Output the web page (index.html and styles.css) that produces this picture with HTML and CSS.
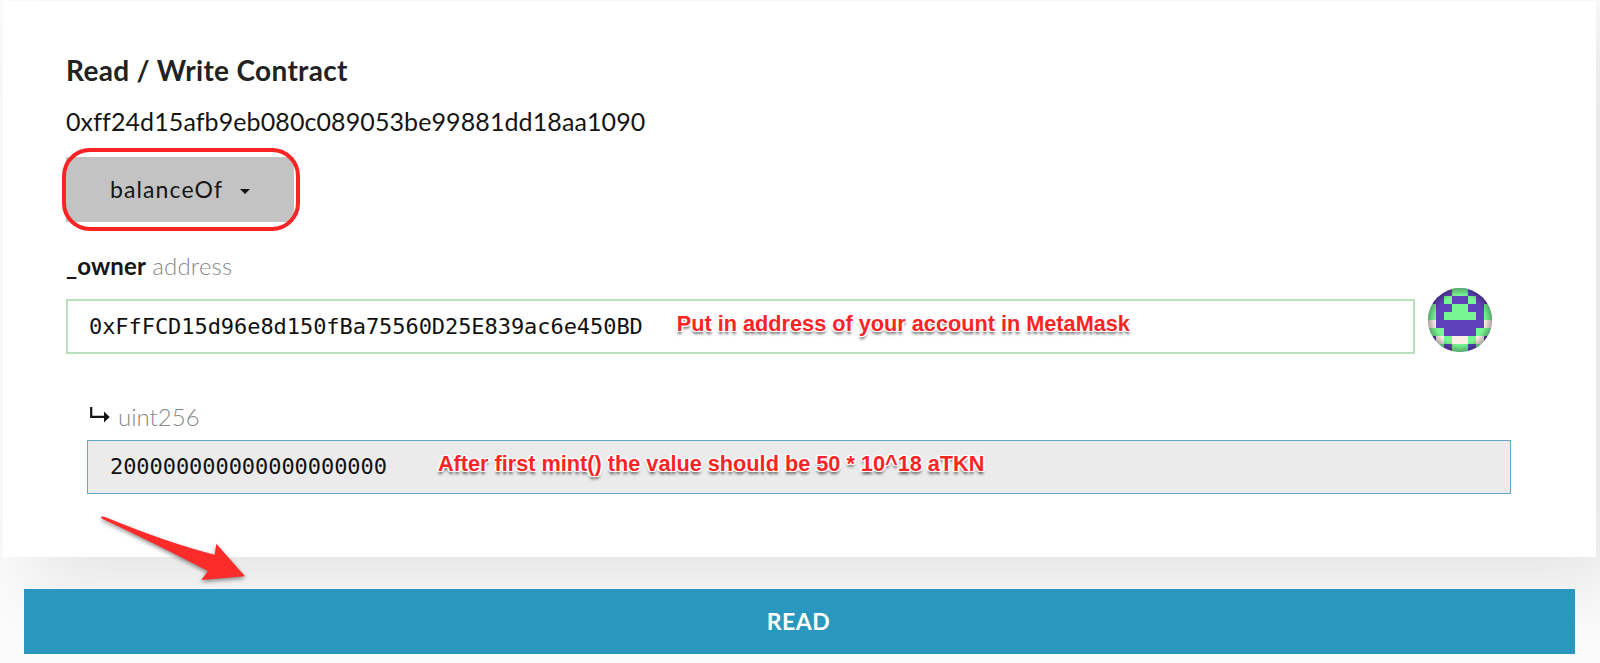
FILE: index.html
```html
<!DOCTYPE html>
<html lang="en">
<head>
<meta charset="utf-8">
<title>Read / Write Contract</title>
<link rel="stylesheet" href="styles.css">
</head>
<body>
<main class="page">
  <section class="card">
    <h1 class="title">Read / Write Contract</h1>
    <p class="contract">0xff24d15afb9eb080c089053be99881dd18aa1090</p>
    <button class="method">balanceOf<span class="caret"></span></button>
    <p class="label"><b>_owner</b> <span>address</span></p>
    <div class="input-row">
      <div class="field valid"><span class="mono">0xFfFCD15d96e8d150fBa75560D25E839ac6e450BD</span><span class="note note-address">Put in address of your account in MetaMask</span></div>
      <svg class="identicon" viewBox="0 0 8 8">
        <defs>
          <clipPath id="round"><circle cx="4" cy="4" r="4"/></clipPath>
          <radialGradient id="shade" cx=".5" cy=".5" r=".5"><stop offset=".76" stop-color="#000" stop-opacity="0"/><stop offset="1" stop-color="#000" stop-opacity=".3"/></radialGradient>
        </defs>
        <g clip-path="url(#round)">
          <path fill="#5f42b9" d="M0 0h8v8H0z"/>
          <g fill="#79f694" shape-rendering="crispEdges">
            <path d="M3 0h2v1H3zM2 1h1v1H2zM5 1h1v1H5zM3 2h2v1H3zM2 3h4v1H2zM0 2h1v2H0zM7 2h1v2H7z"/>
            <path d="M0 5h2v1H0zM6 5h2v1H6zM2 6h1v1H2zM5 6h1v1H5zM3 7h2v1H3zM1 7h1v1H1zM6 7h1v1H6z"/>
          </g>
          <path fill="#5f42b9" d="M2 7h1v1H2zM5 7h1v1H5z"/>
          <path fill="#fcefe6" shape-rendering="crispEdges" d="M0 4h1v1H0zM7 4h1v1H7zM1 6h1v1H1zM3 6h2v1H3zM6 6h1v1H6z"/>
          <circle cx="4" cy="4" r="4" fill="url(#shade)"/>
        </g>
      </svg>
    </div>
    <div class="output">
      <p class="type"><svg class="return" viewBox="0 0 20 16"><path d="M1.2 0v9.8H15" fill="none" stroke="#151515" stroke-width="2.2"/><path d="M14 4.5l5.7 5.4-5.7 5.6z" fill="#151515"/></svg>uint256</p>
      <div class="field result"><span class="mono">200000000000000000000</span><span class="note note-value">After first mint() the value should be 50 * 10^18 aTKN</span></div>
    </div>
    <span class="highlight"></span>
  </section>
  <button class="read">READ</button>
  <svg class="arrow" viewBox="0 0 160 80"><path d="M9.5 6.7Q11 6 13 7Q76 33 122.700 44.700L124.300 33.700L153 66.300L109.300 70L116 61Q62 33 10.500 9Q8.500 8 9.500 6.700z" fill="#fb2c2a"/></svg>
</main>
</body>
</html>
```

FILE: styles.css
```css
* { box-sizing: border-box; }
body { margin: 0; background: #fbfbfb; font-family: Lato, sans-serif; color: #151515; overflow: hidden; }
h1, p { margin: 0; }
.page { position: relative; height: 663px; padding: 1px 4px 0 3px; overflow: hidden; }
.card { position: relative; height: 556px; padding: 52px 85px 0 63px; background: #fff; box-shadow: 28px 28px 70px rgba(0, 0, 0, .09); }
.title { height: 34px; line-height: 34px; font-size: 28px; font-weight: 700; color: #222; letter-spacing: .32px; }
.contract { height: 34px; margin-top: 17px; line-height: 34px; font-size: 25px; letter-spacing: .1px; }
.method { display: flex; align-items: center; width: 228px; height: 65px; margin-top: 19px; padding: 0 0 1px 44px; border: 0; background: #c3c3c3; font: 400 23px Lato, sans-serif; color: #151515; letter-spacing: 1.1px; }
.caret { margin: 5px 0 0 17px; border: 5px solid transparent; border-top-color: #111; border-bottom: 0; }
.label { height: 34px; margin-top: 27px; line-height: 34px; font-size: 24px; letter-spacing: .1px; }
.label b { font-weight: 700; }
.label span, .type { color: #888; font-weight: 300; }
.label span { letter-spacing: .2px; }
.input-row { display: flex; align-items: flex-start; gap: 13px; margin-top: 5px; }
.field { display: flex; align-items: center; height: 55px; }
.valid { width: 1349px; margin-top: 11px; padding-left: 21px; border: 2px solid #b8e0bb; }
.mono { font: 22px "DejaVu Sans Mono", monospace; letter-spacing: -.06px; color: #111; white-space: pre; }
.identicon { width: 64px; height: 64px; }
.output { width: 1424px; margin: 46px 0 0 21px; }
.type { display: flex; height: 34px; line-height: 34px; font-size: 24px; }
.return { width: 20px; height: 16px; margin: 7px 8px 0 3px; }
.result { height: 54px; margin-top: 6px; padding: 0 0 2px 22px; background: #ebebeb; border: 1.500px solid #66a8c8; }
.note { font: 700 21.700px "Liberation Sans", Arial, sans-serif; color: #fb2425; white-space: pre; text-shadow: 1px 0 #fff, -1px 0 #fff, 0 1px #fff, 0 -1px #fff, 1px 1px #fff, -1px -1px #fff, 1px -1px #fff, -1px 1px #fff, 2px 0 1px #fff, -2px 0 1px #fff, 0 3px 3px rgba(0, 0, 0, .65); }
.note-address { margin: -6px 0 0 34px; }
.note-value { margin: -4px 0 0 51px; }
.highlight { position: absolute; left: 59px; top: 147px; width: 238px; height: 83px; border: 4px solid #fb2425; border-radius: 28px; }
.read { position: relative; display: block; width: 1551px; height: 65px; margin: 32px 0 0 21px; padding: 0 2px 2px 0; border: 0; background: #2997be; color: #fff; font: 700 23px Lato, sans-serif; letter-spacing: .5px; }
.arrow { position: absolute; left: 92px; top: 510px; width: 160px; height: 80px; filter: drop-shadow(0 2px 2px rgba(0, 0, 0, .45)); }
```
